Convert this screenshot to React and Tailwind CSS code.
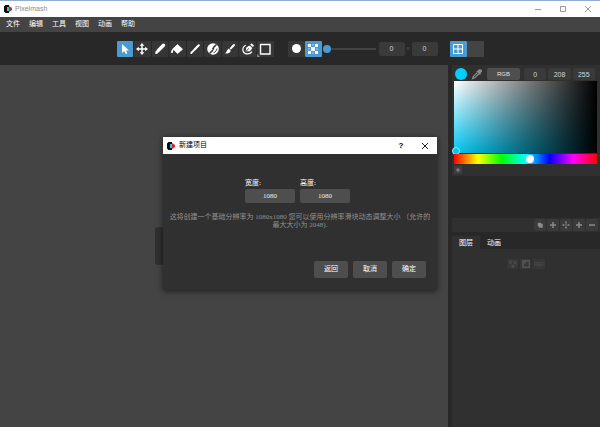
import React, { useState } from 'react';

const TOOLS = ['select', 'move', 'pencil', 'fill', 'line', 'shade', 'brush', 'pen', 'rect'];

const ToolIcon = ({ name }) => {
  const stroke = { fill: 'none', stroke: 'currentColor' };
  return (
    <svg viewBox="0 0 16 16" className="w-4 h-4" fill="currentColor" aria-hidden="true">
      {name === 'select' && <path d="M5 3v9l2.2-2 1.5 3 1.7-.8L9 9.4h3z" />}
      {name === 'move' && (
        <>
          <path d="M8 4v8M4 8h8" {...stroke} strokeWidth="1.500" />
          <path d="M8 2l2.300 2.800H5.700zM8 14l2.300-2.800H5.700zM2 8l2.800-2.300v4.600zM14 8l-2.800-2.300v4.600z" />
        </>
      )}
      {name === 'pencil' && (
        <>
          <path d="M11.500 4.300L6.200 9.600" {...stroke} strokeWidth="3.400" strokeLinecap="round" />
          <path d="M4.300 9.600l2 2-1 1.100-2 .2.100-2.200z" />
        </>
      )}
      {name === 'fill' && (
        <>
          <path d="M8.500 3.500l5 4.700-4.900 4.300-4.800-4.500z" stroke="currentColor" strokeWidth=".8" strokeLinejoin="round" />
          <path d="M4.500 7.500C3 8.500 2 10 2 11c0 1.400 2 1.400 2 0z" />
        </>
      )}
      {name === 'line' && (
        <>
          <path d="M7.600 8.600l4.200-4.300" {...stroke} strokeWidth="2.200" strokeLinecap="round" />
          <path d="M4.200 12l2.600-2.600" {...stroke} strokeWidth="1.800" strokeLinecap="round" />
        </>
      )}
      {name === 'shade' && (
        <>
          <circle cx="8" cy="8" r="5.800" />
          <path d="M8.500 6.500L11 4M5 12l2.500-2.500" stroke="#363636" strokeWidth="1.600" strokeLinecap="round" />
          <path d="M12 7.500c-.3 2-1.500 3.500-3.500 4.200" {...stroke} stroke="#363636" strokeWidth=".9" />
          <circle cx="8.200" cy="7.800" r="1.100" fill="#363636" />
        </>
      )}
      {name === 'brush' && (
        <>
          <path d="M8.800 7.400L12 4" {...stroke} strokeWidth="2" strokeLinecap="round" />
          <path d="M6.600 7.600l2.100 2c-.3 2.400-2.600 3.400-5.500 2.800 1.600-.9 1.500-3.600 3.400-4.800z" />
        </>
      )}
      {name === 'pen' && (
        <>
          <path d="M5.800 4.200C1.500 6 2 12.500 7 12.900c2 .1 4-.8 5-2.300" {...stroke} strokeWidth="1.200" />
          <path d="M5.600 10.600l.7-4 3.200-2 2.800 2.400-2.200 3.200z" />
          <path d="M6 10.300l2.900-2.800" stroke="#363636" />
          <path d="M10.200 3.800l1.200-1.600 2.600 2.200-1.300 1.600z" />
        </>
      )}
      {name === 'rect' && <path d="M3.500 3.500h9.500v9.500H3.500z" {...stroke} strokeWidth="1.400" />}
    </svg>
  );
};

const Logo = () => (
  <svg viewBox="0 0 8 10" className="w-2 h-2.5 shrink-0" aria-hidden="true">
    <path d="M1.500 1h3.500v2H3v4h2v2H1.500L0 7.500v-5z" fill="#0a0a0a" />
    <path d="M3 3h2v4H3z" fill="#19d3e0" />
    <path d="M5 2l3 2v2L5 8z" fill="#e51c2b" />
  </svg>
);

const SmallButton = ({ label, children }) => (
  <button aria-label={label} className="w-3 h-3 flex items-center justify-center rounded-[2px] bg-[#3a3a3a] text-[#8a8a8a]">
    <svg viewBox="0 0 12 12" className="w-3 h-3" fill="none" stroke="currentColor" strokeWidth="1.5">
      {children}
    </svg>
  </button>
);

const NumberBox = ({ label, value, className }) => (
  <input
    aria-label={label}
    defaultValue={value}
    className={`min-w-0 rounded-[2px] bg-[#3a3a3a] text-center text-[7px] text-[#d4d4d4] outline-none ${className}`}
  />
);

const SizeField = ({ id, label, value }) => (
  <div className="flex flex-col">
    <label htmlFor={id} className="text-[7px] leading-[9px] text-white mb-px">{label}</label>
    <input
      id={id}
      defaultValue={value}
      className="w-[50px] h-3.5 rounded-[2px] bg-[#4e4e4e] text-center text-[7px] text-[#f0f0f0] outline-none"
    />
  </div>
);

const Toolbar = () => {
  const [tool, setTool] = useState('select');

  return (
    <div className="h-[33px] shrink-0 flex items-center justify-center bg-[#282828] text-white">
      <div className="w-[157px] flex gap-px">
        {TOOLS.map((name) => (
          <button
            key={name}
            aria-label={name}
            onClick={() => setTool(name)}
            className={`relative flex-1 h-4 flex items-center justify-center rounded-[1px] ${tool === name ? 'bg-[#4a9bd1]' : 'bg-[#363636]'}`}
          >
            <ToolIcon name={name} />
            {name === 'rect' && (
              <span className="absolute left-0 bottom-0 border-r-[3px] border-t-[3px] border-r-transparent border-t-transparent border-l-[3px] border-l-[#8a8a8a]" />
            )}
          </button>
        ))}
      </div>

      <div className="flex items-center ml-3.5">
        <button aria-label="round" className="w-[17px] h-4 flex items-center justify-center rounded-[1px] bg-[#363636]">
          <span className="w-[9px] h-[9px] rounded-full bg-white" />
        </button>
        <button aria-label="dither" className="w-[17px] h-4 flex items-center justify-center rounded-[1px] bg-[#4a9bd1]">
          <svg viewBox="0 0 10 10" className="w-2.5 h-2.5" fill="#fff">
            <path d="M0 0h3v3H0zM7 0h3v3H7zM0 7h3v3H0zM7 7h3v3H7zM3 3h4v4H3z" />
            <path d="M4 0h2v2H4zM4 8h2v2H4zM0 4h2v2H0zM8 4h2v2H8z" opacity=".3" />
          </svg>
        </button>
        <input
          type="range"
          aria-label="size"
          defaultValue="0"
          className="w-[53px] h-2 ml-px appearance-none bg-transparent [&::-webkit-slider-runnable-track]:h-0.5 [&::-webkit-slider-runnable-track]:bg-[#424242] [&::-webkit-slider-thumb]:appearance-none [&::-webkit-slider-thumb]:w-2 [&::-webkit-slider-thumb]:h-2 [&::-webkit-slider-thumb]:-mt-[3px] [&::-webkit-slider-thumb]:rounded-full [&::-webkit-slider-thumb]:bg-[#4a9bd1]"
        />
        <NumberBox label="x" value="0" className="w-[26px] h-3.5 ml-[3px]" />
        <span className="w-[7px] text-center text-[6px] text-[#5a5a5a]">x</span>
        <NumberBox label="y" value="0" className="w-[26px] h-3.5" />
      </div>

      <div className="flex ml-3">
        <button aria-label="grid" className="w-[17px] h-4 flex items-center justify-center rounded-[1px] bg-[#4a9bd1]">
          <svg viewBox="0 0 10 10" className="w-2.5 h-2.5" fill="none" stroke="#fff">
            <path d="M.5.5h9v9h-9zM5 .5v9M.5 5h9" />
          </svg>
        </button>
        <button aria-label="blank" className="w-[17px] h-4 rounded-[1px] bg-[#444444]" />
      </div>
    </div>
  );
};

const ColorPanel = () => (
  <div className="bg-[#303030] pl-0.5 pr-[3px] pt-0.5 pb-0.5">
    <div className="flex items-center h-3.5">
      <span className="w-3 h-3 ml-px rounded-full bg-[#00d0ff]" />
      <svg viewBox="0 0 12 12" className="w-3 h-3 ml-1" fill="#8c8c8c" aria-hidden="true">
        <path d="M7 2.800c1-2.400 4.400-1.600 4 .8-.2.900-.9 1.300-1.600 1.600l.6.800-1.100 1L5.400 3.600l1-1z" />
        <path d="M6.300 4.600L2.400 8.400 1.600 10.600l2.200-.8L7.600 6" fill="none" stroke="#8c8c8c" strokeWidth="1.200" />
      </svg>
      <button className="w-[33px] h-3 ml-1 rounded-[2px] bg-[#4e4e4e] text-[6px] leading-3 text-[#e0e0e0]">RGB</button>
      <div className="flex flex-1 gap-0.5 ml-1 mr-0.5">
        <NumberBox label="R" value="0" className="w-full h-3" />
        <NumberBox label="G" value="208" className="w-full h-3" />
        <NumberBox label="B" value="255" className="w-full h-3" />
      </div>
    </div>
    <div className="relative h-[72px] bg-[linear-gradient(to_right,transparent,#000),linear-gradient(to_bottom,#fff,#00c8f5)]">
      <span className="absolute -left-0.5 -bottom-0.5 w-2 h-2 rounded-full border border-[#9be8fa] bg-[#00c8f5]" />
    </div>
    <div className="relative h-2.5 mt-px bg-[linear-gradient(to_right,#f00,#ff0,#0f0,#0ff,#00f,#f0f,#f00)]">
      <span className="absolute left-1/2 top-px w-2 h-2 rounded-full bg-white" />
    </div>
    <button aria-label="add swatch" className="w-2 h-2 mt-0.5 flex items-center justify-center bg-[#3e3e3e] text-[#8a8a8a]">
      <svg viewBox="0 0 8 8" className="w-2 h-2" stroke="currentColor">
        <path d="M4 2v4M2 4h4" />
      </svg>
    </button>
  </div>
);

const SidePanel = () => (
  <aside className="w-[148px] shrink-0 flex flex-col bg-[#282828]">
    <ColorPanel />

    <div className="h-3.5 mt-[42px] flex items-center justify-end gap-px pr-0.5 bg-[#303030]">
      <SmallButton label="duplicate">
        <path d="M4 4h3v3H4zM5 5h3.500v3.500H5z" fill="currentColor" strokeWidth=".5" />
      </SmallButton>
      <SmallButton label="add layer"><path d="M6 3v6M3 6h6" /></SmallButton>
      <SmallButton label="center"><path d="M6 2.500v2M6 7.500v2M2.500 6h2M7.500 6h2M5.500 6h1" /></SmallButton>
      <SmallButton label="add"><path d="M6 3v6M3 6h6" /></SmallButton>
      <SmallButton label="remove"><path d="M3 6h6" /></SmallButton>
    </div>

    <div className="flex mt-1 text-[7px] leading-[13px] text-white">
      <button className="w-7 h-[13px] bg-[#303030]">图层</button>
      <button className="w-7 h-[13px]">动画</button>
    </div>
    <div className="flex-1 bg-[#303030] pt-2.5">
      <div className="flex justify-center gap-0.5 text-[#505050]">
        <button aria-label="effects" className="w-[11px] h-2.5 flex items-center justify-center rounded-[1px] bg-[#373737]">
          <svg viewBox="0 0 8 8" className="w-2 h-2" fill="none" stroke="currentColor">
            <path d="M1 4.500V1h2.500M1 3h2M4.500 1l3 3.500M7.500 1l-3 3.500" />
            <path d="M1.500 5.500h5L4 8z" fill="currentColor" stroke="none" />
          </svg>
        </button>
        <button aria-label="mask" className="w-[11px] h-2.5 flex items-center justify-center rounded-[1px] bg-[#373737]">
          <svg viewBox="0 0 8 8" className="w-2 h-2" fill="currentColor">
            <path d="M0 0h8v8H0zM6.500 1.500C4 2 2 4 1.500 6.500h5z" fillRule="evenodd" />
          </svg>
        </button>
        <button className="w-3 h-2.5 rounded-[1px] bg-[#373737] text-[5px] leading-[10px]">REF</button>
      </div>
    </div>
  </aside>
);

const DialogButton = ({ children }) => (
  <button className="w-[34px] h-[17px] rounded-[2px] bg-[#4e4e4e] text-[7px] text-white">{children}</button>
);

const NewProjectDialog = () => (
  <div role="dialog" aria-label="新建项目" className="w-[274px] flex flex-col bg-[#303030] shadow-[0_1px_6px_rgba(0,0,0,0.6)]">
    <div className="h-[17px] flex items-center bg-white pl-1 text-black">
      <Logo />
      <span className="ml-1 text-[7px]">新建项目</span>
      <button aria-label="help" className="ml-auto w-3 text-[8px] font-bold">?</button>
      <button aria-label="close" className="w-2 ml-3.5 mr-2">
        <svg viewBox="0 0 8 8" className="w-2 h-2" stroke="#222"><path d="M1 1l6 6M7 1L1 7" /></svg>
      </button>
    </div>

    <form className="flex flex-col pt-[25px] pb-3 font-['Liberation_Serif','Noto_Sans_CJK_SC',serif]" onSubmit={(e) => e.preventDefault()}>
      <div className="flex justify-center gap-[5px] pr-[5px]">
        <SizeField id="width" label="宽度:" value="1080" />
        <SizeField id="height" label="高度:" value="1080" />
      </div>
      <p className="px-1 mt-2.5 text-center text-[7px] leading-2 text-[#909090]">
        这将创建一个基础分辨率为 1080x1080 您可以使用分辨率滑块动态调整大小 （允许的
        <br />
        最大大小为 2048).
      </p>
      <div className="flex justify-end gap-[5px] mt-8 pr-[11px]">
        <DialogButton>返回</DialogButton>
        <DialogButton>取消</DialogButton>
        <DialogButton>确定</DialogButton>
      </div>
    </form>
  </div>
);

const App = () => (
  <div className="relative h-screen flex flex-col overflow-hidden bg-[#282828] font-['Liberation_Sans','Noto_Sans_CJK_SC',sans-serif]">
    <header className="h-[17px] shrink-0 flex items-center border-t border-[#8fb0d0] bg-white pl-1">
      <Logo />
      <span className="ml-[3px] text-[7px] text-[#8a8a8a]">Pixelmash</span>
      <div className="flex gap-[17px] ml-auto mr-2">
        <button aria-label="minimize"><svg viewBox="0 0 8 8" className="w-2 h-2" stroke="#999"><path d="M1 4.500h6" /></svg></button>
        <button aria-label="maximize"><svg viewBox="0 0 8 8" className="w-2 h-2" stroke="#999" fill="none"><path d="M1.500 1.500h5v5h-5z" /></svg></button>
        <button aria-label="close window"><svg viewBox="0 0 8 8" className="w-2 h-2" stroke="#999"><path d="M1 1l6 6M7 1L1 7" /></svg></button>
      </div>
    </header>

    <nav className="h-[15px] shrink-0 flex items-center gap-[9px] bg-[#444444] pl-1.5 text-[7px] text-white">
      {['文件', '编辑', '工具', '视图', '动画', '帮助'].map((item) => (
        <button key={item} className="w-3.5">{item}</button>
      ))}
    </nav>

    <Toolbar />

    <div className="flex-1 flex">
      <main className="flex-1 flex items-center justify-center bg-[#444444]">
        <div className="w-[138px] h-[38px] rounded-[3px] bg-[#303030]" />
      </main>
      <div className="w-1 bg-[#282828]" />
      <SidePanel />
    </div>

    {/* modal */}
    <div className="absolute inset-0 flex items-center justify-center">
      <NewProjectDialog />
    </div>
  </div>
);

export default App;
